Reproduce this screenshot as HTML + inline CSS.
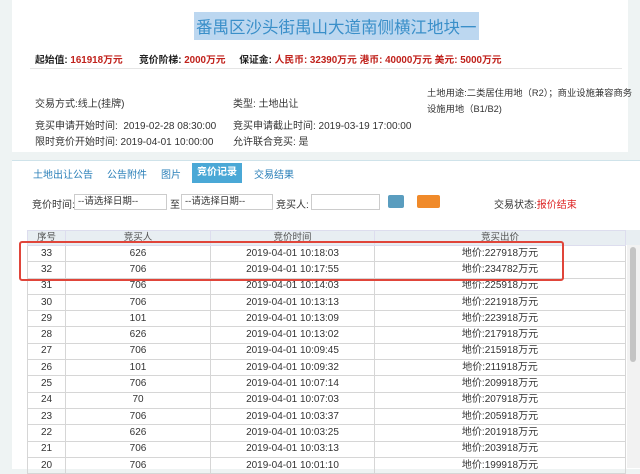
<!DOCTYPE html><html><head><meta charset="utf-8"><style>
body{margin:0;width:640px;height:468px;overflow:hidden;background:#eef3f3;font-family:"Liberation Sans","Noto Sans CJK SC",sans-serif;font-size:10px;color:#333;position:relative}
.a{position:absolute;white-space:nowrap}
.top{position:absolute;left:12px;top:0;width:616px;height:152px;background:#fff}
.bot{position:absolute;left:12px;top:160px;width:628px;height:308px;background:#fff;border-top:1px solid #cfe3ea}
.r{color:#c0211b;font-weight:bold}
.inp{position:absolute;height:15px;border:1px solid #ccc;background:#fff;font-size:9.5px;line-height:14px;padding-left:3px;box-sizing:border-box}
table{position:absolute;left:27px;top:230px;width:599px;border-collapse:collapse;font-size:10px}
td{border:1px solid #d6d6d6;height:15.3px;line-height:14px;padding:0;text-align:center}
tr.h td{background:#e8eef2;height:14px;font-size:9.5px;color:#555;border-color:#dde}
</style></head><body>
<div class="top"></div>
<div class="a" style="left:194px;top:12px;font-size:16.5px;color:#3a8fc9;background:#bcd7f0;padding:2px 2px">番禺区沙头街禺山大道南侧横江地块一</div>
<div class="a" style="left:35px;top:52px;font-weight:bold;color:#222;font-size:9.8px">起始值: <span class="r">161918万元</span>&nbsp;&nbsp;&nbsp;&nbsp;&nbsp; 竞价阶梯: <span class="r">2000万元</span>&nbsp;&nbsp;&nbsp;&nbsp; 保证金: <span class="r">人民币: 32390万元 港币: 40000万元 美元: 5000万元</span></div>
<div class="a" style="left:30px;top:68px;width:592px;border-top:1px solid #e5e5e5"></div>
<div class="a" style="left:35px;top:95px">交易方式:线上(挂牌)</div>
<div class="a" style="left:233px;top:95px">类型: 土地出让</div>
<div class="a" style="left:427px;top:85px;line-height:16px;font-size:9.3px">土地用途:二类居住用地（R2）；商业设施兼容商务<br>设施用地（B1/B2)</div>
<div class="a" style="left:35px;top:117px">竞买申请开始时间: &nbsp;2019-02-28 08:30:00</div>
<div class="a" style="left:233px;top:117px">竞买申请截止时间: 2019-03-19 17:00:00</div>
<div class="a" style="left:35px;top:133px">限时竞价开始时间: 2019-04-01 10:00:00</div>
<div class="a" style="left:233px;top:133px">允许联合竞买: 是</div>
<div class="bot"></div>
<div class="a" style="left:33px;top:166px;color:#2a7fb8">土地出让公告</div>
<div class="a" style="left:107px;top:166px;color:#2a7fb8">公告附件</div>
<div class="a" style="left:161px;top:166px;color:#2a7fb8">图片</div>
<div class="a" style="left:192px;top:163px;width:50px;height:20px;background:#4aa8d6;color:#fff;text-align:center;line-height:20px;font-weight:bold">竞价记录</div>
<div class="a" style="left:254px;top:166px;color:#2a7fb8">交易结果</div>
<div class="a" style="left:32px;top:196px">竞价时间:</div>
<div class="inp" style="left:74px;top:194px;width:93px;height:16px">--请选择日期--</div>
<div class="a" style="left:170px;top:196px">至</div>
<div class="inp" style="left:181px;top:194px;width:92px;height:16px">--请选择日期--</div>
<div class="a" style="left:276px;top:196px">竞买人:</div>
<div class="inp" style="left:311px;top:194px;width:69px;height:16px"></div>
<div class="a" style="left:388px;top:195px;width:16px;height:13px;background:#5a9dbf;border-radius:2px"></div>
<div class="a" style="left:417px;top:195px;width:23px;height:13px;background:#f08a2a;border-radius:2px"></div>
<div class="a" style="left:494px;top:196px">交易状态:<span style="color:#d22">报价结束</span></div>
<div class="a" style="left:27px;top:230px;width:613px;height:15px;background:#e8eef2"></div>
<table>
<colgroup><col style="width:38px"><col style="width:145px"><col style="width:164px"><col></colgroup>
<tr class="h"><td>序号</td><td>竞买人</td><td>竞价时间</td><td>竞买出价</td></tr>
<tr><td>33</td><td>626</td><td>2019-04-01 10:18:03</td><td>地价:227918万元</td></tr>
<tr><td>32</td><td>706</td><td>2019-04-01 10:17:55</td><td>地价:234782万元</td></tr>
<tr><td>31</td><td>706</td><td>2019-04-01 10:14:03</td><td>地价:225918万元</td></tr>
<tr><td>30</td><td>706</td><td>2019-04-01 10:13:13</td><td>地价:221918万元</td></tr>
<tr><td>29</td><td>101</td><td>2019-04-01 10:13:09</td><td>地价:223918万元</td></tr>
<tr><td>28</td><td>626</td><td>2019-04-01 10:13:02</td><td>地价:217918万元</td></tr>
<tr><td>27</td><td>706</td><td>2019-04-01 10:09:45</td><td>地价:215918万元</td></tr>
<tr><td>26</td><td>101</td><td>2019-04-01 10:09:32</td><td>地价:211918万元</td></tr>
<tr><td>25</td><td>706</td><td>2019-04-01 10:07:14</td><td>地价:209918万元</td></tr>
<tr><td>24</td><td>70</td><td>2019-04-01 10:07:03</td><td>地价:207918万元</td></tr>
<tr><td>23</td><td>706</td><td>2019-04-01 10:03:37</td><td>地价:205918万元</td></tr>
<tr><td>22</td><td>626</td><td>2019-04-01 10:03:25</td><td>地价:201918万元</td></tr>
<tr><td>21</td><td>706</td><td>2019-04-01 10:03:13</td><td>地价:203918万元</td></tr>
<tr><td>20</td><td>706</td><td>2019-04-01 10:01:10</td><td>地价:199918万元</td></tr>
</table>
<div class="a" style="left:627px;top:245px;width:13px;height:223px;background:#f2f2f2"></div>
<div class="a" style="left:630px;top:247px;width:6px;height:115px;background:#c4c4c4;border-radius:3px"></div>
<div class="a" style="left:19px;top:241px;width:541px;height:36px;border:2px solid #e0453a;border-radius:3px"></div>
</body></html>
